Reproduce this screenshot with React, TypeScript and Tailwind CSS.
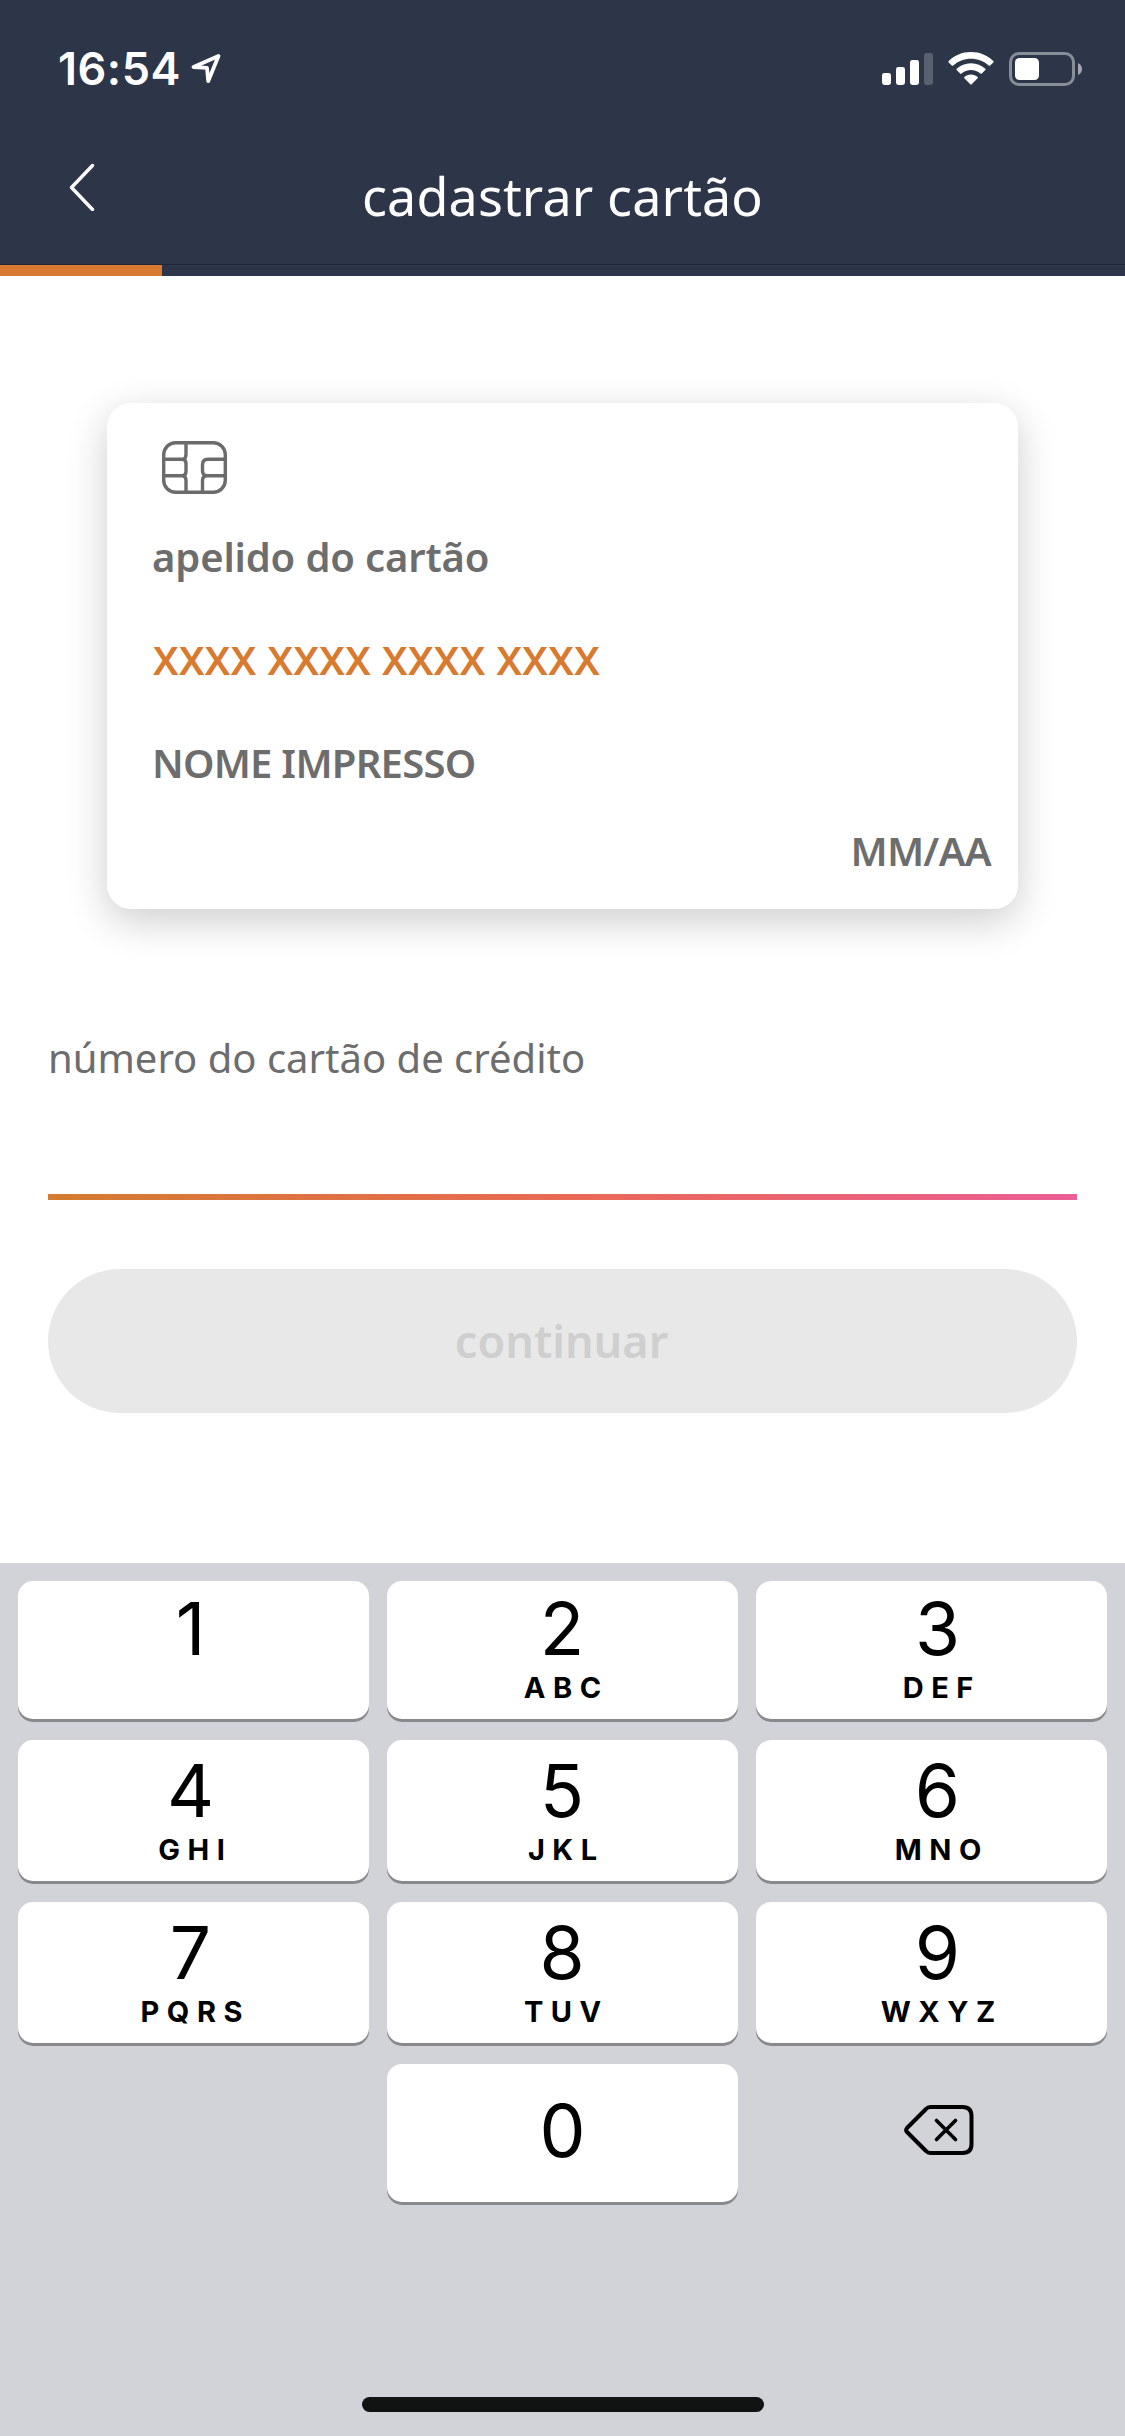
type Key = { digit: string; letters: string };

const keyRows: { height: string; keys: Key[] }[] = [
  {
    height: "h-[138px]",
    keys: [
      { digit: "1", letters: "" },
      { digit: "2", letters: "ABC" },
      { digit: "3", letters: "DEF" },
    ],
  },
  {
    height: "h-[141px]",
    keys: [
      { digit: "4", letters: "GHI" },
      { digit: "5", letters: "JKL" },
      { digit: "6", letters: "MNO" },
    ],
  },
  {
    height: "h-[141px]",
    keys: [
      { digit: "7", letters: "PQRS" },
      { digit: "8", letters: "TUV" },
      { digit: "9", letters: "WXYZ" },
    ],
  },
];

const columnNudge = ["pr-[4px]", "", "pl-[13px]"];
const digitNudge = ["pr-[2px]", "pr-px", "pr-px"];

function LocationIcon() {
  return (
    <svg className="ml-[9px]" width="32" height="34" viewBox="0 0 32 34" fill="none" stroke="#fff" strokeWidth="3.8" strokeLinejoin="round">
      <path d="M28.500 4 L3.500 15 L17 15.800 L18.200 29.200 Z" />
    </svg>
  );
}

function SignalIcon() {
  return (
    <svg width="51" height="34" viewBox="0 0 51 34" fill="#fff">
      <rect x="0" y="21" width="9" height="12" rx="2.4" />
      <rect x="14" y="15" width="9" height="18" rx="2.4" />
      <rect x="28" y="8" width="9" height="25" rx="2.4" />
      <rect x="42" y="1" width="9" height="32" rx="2.4" fill="#596170" />
    </svg>
  );
}

function WifiIcon() {
  return (
    <svg width="46" height="34" viewBox="0 0 46 34" fill="#fff">
      <path d="M23 0 C32 0 39.600 3.400 45.300 8.900 Q46 9.700 45.300 10.400 L42.200 13.500 Q41.500 14.100 40.700 13.500 C35.800 9 29.800 6.700 23 6.700 C16.200 6.700 10.200 9 5.300 13.500 Q4.500 14.100 3.800 13.500 L0.700 10.400 Q0 9.700 0.700 8.900 C6.400 3.400 14 0 23 0 Z" />
      <path d="M23 11.200 C28.700 11.200 33.500 13.300 37.300 16.700 Q38 17.400 37.300 18.100 L33.800 21.600 Q33.200 22.200 32.500 21.600 C29.800 19.300 26.600 18 23 18 C19.400 18 16.200 19.300 13.500 21.600 Q12.800 22.200 12.200 21.600 L8.700 18.100 Q8 17.400 8.700 16.700 C12.500 13.300 17.300 11.200 23 11.200 Z" />
      <path d="M23 22.500 C25.700 22.500 27.900 23.400 29.600 24.900 Q30.300 25.600 29.600 26.300 L23.700 32.300 Q23 33 22.300 32.300 L16.400 26.300 Q15.700 25.600 16.400 24.900 C18.100 23.400 20.300 22.500 23 22.500 Z" />
    </svg>
  );
}

function BatteryIcon() {
  return (
    <svg width="74" height="34" viewBox="0 0 74 34">
      <rect x="1.500" y="1.500" width="63" height="31" rx="8.500" fill="none" stroke="#878d99" strokeWidth="3" />
      <rect x="6" y="6" width="24" height="22" rx="4.500" fill="#fff" />
      <path d="M69 11 C71.400 12 73 14.300 73 17 C73 19.700 71.400 22 69 23 Z" fill="#a2a7b0" />
    </svg>
  );
}

function ChipIcon() {
  return (
    <svg className="ml-[10px]" width="65" height="53" viewBox="0 0 65 53" fill="none" stroke="#6b6b6b" strokeWidth="3.400">
      <rect x="1.700" y="1.700" width="61.600" height="49.600" rx="12" />
      <path d="M24 2 V13.500 Q24 18 20.500 18.300 H2 M20.500 18.300 Q24 18.800 24 22.500 V30.500 Q24 34.300 20.500 34.800 H2 M20.500 34.800 Q24 35.200 24 39.500 V51" />
      <path d="M63 18.300 H46 Q40.500 18.300 40.500 23.500 V29.500 Q40.500 34.300 44.500 34.800 H63 M44.500 34.800 Q40.500 35.200 40.500 39.500 V51" />
    </svg>
  );
}

function BackspaceIcon() {
  return (
    <svg width="70" height="50" viewBox="0 0 70 50" fill="none" stroke="#000" strokeWidth="4" strokeLinecap="round" strokeLinejoin="round">
      <path d="M26.500 2 H58.500 Q67.500 2 67.500 11 V39 Q67.500 48 58.500 48 H26.500 Q23.800 48 22 46 L3 27 Q1.300 25 3 23 L22 4 Q23.800 2 26.500 2 Z" />
      <path d="M32.500 15.500 L51.500 34.500 M51.500 15.500 L32.500 34.500" strokeWidth="3.600" />
    </svg>
  );
}

function Header() {
  return (
    <header className="flex h-[276px] flex-col bg-[#2d3548] text-white">
      <div className="flex h-[138px] shrink-0 items-center justify-between pr-[42px] pl-[58px]">
        <div className="flex items-center">
          <span className="font-[Inter,sans-serif] text-[45px] leading-[54px] font-semibold tracking-[0.5px]">16:54</span>
          <LocationIcon />
        </div>
        <div className="flex items-center">
          <SignalIcon />
          <div className="ml-[15px]">
            <WifiIcon />
          </div>
          <div className="ml-[15px]">
            <BatteryIcon />
          </div>
        </div>
      </div>
      <div className="grid h-[126px] shrink-0 grid-cols-[200px_1fr_200px] items-start">
        <button className="mt-[25px] ml-[68px] w-[30px]" aria-label="voltar">
          <svg width="28" height="48" viewBox="0 0 28 48" fill="none" stroke="#fff" strokeWidth="3.400" strokeLinecap="round" strokeLinejoin="round">
            <path d="M24.500 2.500 L3.500 24.500 L24.500 46.500" />
          </svg>
        </button>
        <h1 className="mt-[18px] text-center text-[52px] leading-[80px] tracking-[0.15px]">cadastrar cartão</h1>
      </div>
      <div className="h-[12px] border-t border-[#1f2739]">
        <div className="h-[11px] w-[162px] bg-[#d87a2f]" />
      </div>
    </header>
  );
}

function CreditCard() {
  return (
    <section className="mt-[127px] mr-[107px] ml-[107px] flex h-[506px] flex-col rounded-[24px] bg-white pt-[38px] pr-[27px] pl-[45px] text-[40px] leading-[60px] font-semibold text-[#6d6d6d] shadow-[0_12px_42px_rgba(0,0,0,0.2)]">
      <ChipIcon />
      <p className="mt-[33px] tracking-[-0.15px]">apelido do cartão</p>
      <p className="mt-[43px] pl-px tracking-[0.4px] text-[#d87a2f]">XXXX XXXX XXXX XXXX</p>
      <p className="mt-[43px] tracking-[-0.75px]">NOME IMPRESSO</p>
      <p className="mt-[28px] text-right tracking-[-0.7px]">MM/AA</p>
    </section>
  );
}

function Keyboard() {
  return (
    <div className="flex h-[873px] flex-col bg-[#d2d3d9] px-[18px] pt-[18px] font-[Inter,sans-serif] text-black">
      <div className="flex flex-col gap-[21px]">
        {keyRows.map((row) => (
          <div key={row.keys[0].digit} className="grid grid-cols-3 gap-[18px]">
            {row.keys.map((key, column) => (
              <button
                key={key.digit}
                className={`flex flex-col items-center justify-end rounded-[15px] bg-white pb-[16px] shadow-[0_3px_0_#88898d] ${row.height} ${columnNudge[column]}`}
              >
                <span className={`text-[73px] leading-[80px] ${digitNudge[column]}`}>{key.digit}</span>
                <span className="mt-[4px] h-[30px] pl-[7.500px] text-[29px] leading-[30px] font-bold tracking-[7.500px]">
                  {key.letters}
                </span>
              </button>
            ))}
          </div>
        ))}
        <div className="grid grid-cols-3 gap-[18px]">
          <button className="col-start-2 flex h-[138px] items-center justify-center rounded-[15px] bg-white pb-[4px] shadow-[0_3px_0_#88898d]">
            <span className="text-[73px] leading-[80px]">0</span>
          </button>
          <button className="flex h-[138px] items-center justify-center pb-[6px] pl-[15px]" aria-label="apagar">
            <BackspaceIcon />
          </button>
        </div>
      </div>
      <div className="mx-auto mt-auto mb-[24px] h-[15px] w-[402px] rounded-full bg-[#111212]" />
    </div>
  );
}

export default function App() {
  return (
    <div className="flex h-[2436px] w-[1125px] flex-col overflow-hidden bg-white font-['Noto_Sans',sans-serif]">
      <Header />
      <main className="flex h-[1287px] shrink-0 flex-col">
        <CreditCard />
        <div className="mx-[48px] mt-[118px] h-[173px] bg-[linear-gradient(to_right,#d37b2f,#e96954_50%,#ea5f95)]">
          <div className="h-[167px] bg-white">
            <label className="block pt-px text-[40px] leading-[60px] text-[#6d6d6d]">
              número do cartão de crédito
            </label>
          </div>
        </div>
        <button className="mx-[48px] mt-[69px] h-[144px] rounded-full bg-[#e8e8e8] pr-[2px] text-[45px] font-semibold text-[#cfcfcf]">
          continuar
        </button>
      </main>
      <Keyboard />
    </div>
  );
}
